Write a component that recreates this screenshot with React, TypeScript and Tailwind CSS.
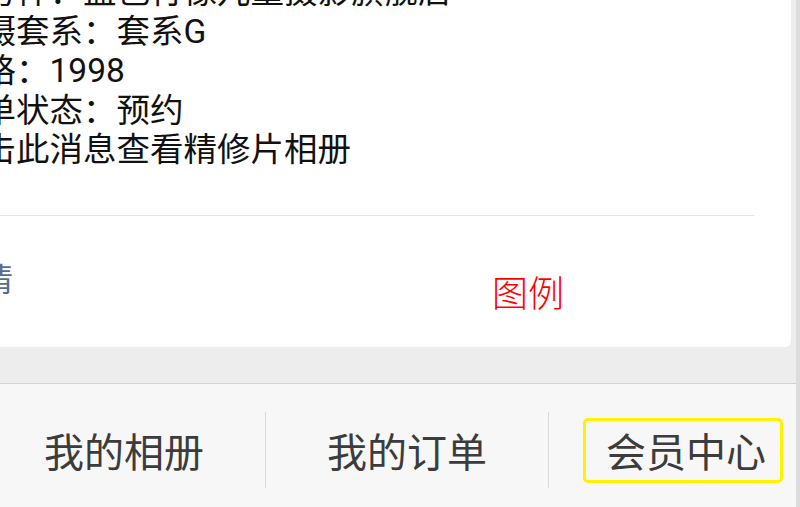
import React from 'react';

const lines = [
  '服务样：蓝色行像儿童摄影旗舰店',
  '拍摄套系：套系G',
  '价格：1998',
  '订单状态：预约',
  '点击此消息查看精修片相册',
];

const tabs = ['我的相册', '我的订单'];

export default function App() {
  return (
    <div className="w-[800px] h-[507px] overflow-hidden flex bg-[#ededed] font-['Roboto','Noto_Sans_CJK_SC',sans-serif]">
      {/* Main column */}
      <div className="w-[796px] h-full overflow-hidden flex flex-col">
        {/* Message card */}
        <div className="h-[347px] shrink-0 ml-[-88px] w-[879px] bg-white rounded-br-[6px] flex flex-col overflow-hidden">
          <div className="mt-[-28px] px-[37px] text-[33.5px] leading-[39.5px] text-[#111] whitespace-nowrap">
            {lines.map(line => (
              <div key={line}>{line}</div>
            ))}
          </div>
          <div className="mt-[45px] mx-[37px] border-t border-[#e3e3e3]" />
          <div className="relative flex-1 px-[37px]">
            <div className="mt-[46px] text-[32px] leading-[36px] text-[#576b95]">详情</div>
            {/* annotation label */}
            <span className="absolute left-[580px] top-[55px] text-[36px] leading-[40px] text-[#ff0000] font-['Noto_Sans_CJK_SC',sans-serif] font-light">
              图例
            </span>
          </div>
        </div>

        {/* Bottom menu bar */}
        <div className="mt-[36px] flex-1 border-t border-[#d2d2d2] bg-[#f7f7f7]">
          <div className="ml-[-17px] flex pt-[28px] text-[40px] leading-[48px] text-[#3c3c3c] font-['Noto_Sans_CJK_SC',sans-serif] font-normal whitespace-nowrap">
            {tabs.map(tab => (
              <div key={tab} className="w-[283px] h-[76px] shrink-0 flex items-center justify-center border-r border-[#d9d9d9]">
                {tab}
              </div>
            ))}
            <div className="w-[283px] h-[76px] shrink-0 flex items-center">
              <div className="ml-[34px] w-[200px] h-[65px] flex items-center pl-[20px] border-[3px] border-[#fff200] rounded-[5px]">
                会员中心
              </div>
            </div>
          </div>
        </div>
      </div>

      {/* Right scroll strip */}
      <div className="w-[4px] h-full bg-[#dcdcdc]" />
    </div>
  );
}
